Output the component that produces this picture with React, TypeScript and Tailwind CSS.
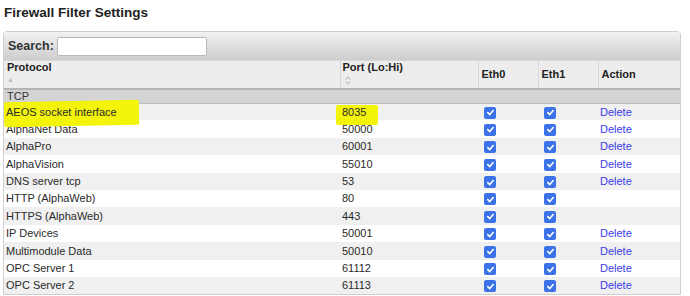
import React from "react";

type Row = { name: string; port: string; del: boolean; mark?: boolean };

const rows: Row[] = [
  { name: "AEOS socket interface", port: "8035", del: true, mark: true },
  { name: "AlphaNet Data", port: "50000", del: true },
  { name: "AlphaPro", port: "60001", del: true },
  { name: "AlphaVision", port: "55010", del: true },
  { name: "DNS server tcp", port: "53", del: true },
  { name: "HTTP (AlphaWeb)", port: "80", del: false },
  { name: "HTTPS (AlphaWeb)", port: "443", del: false },
  { name: "IP Devices", port: "50001", del: true },
  { name: "Multimodule Data", port: "50010", del: true },
  { name: "OPC Server 1", port: "61112", del: true },
  { name: "OPC Server 2", port: "61113", del: true },
];

const Check = () => (
  <span className="inline-flex w-[12px] h-[12px] rounded-[2px] bg-[#3b72e8] items-center justify-center align-middle">
    <svg width="9" height="9" viewBox="0 0 10 10">
      <path d="M2 5.2 L4.2 7.3 L8 2.8" stroke="white" strokeWidth="1.8" fill="none" strokeLinecap="round" strokeLinejoin="round" />
    </svg>
  </span>
);

// yellow marker pen highlight drawn over the row
const Marker: React.FC<{ children: React.ReactNode; className: string }> = ({ children, className }) => (
  <span className="relative inline-block">
    <span className={"absolute bg-[#f4f40a] " + className}></span>
    <span className="relative">{children}</span>
  </span>
);

export default function App() {
  return (
    <div className="w-[690px] h-[296px] bg-white overflow-hidden text-[#2a2a2a] font-['Liberation_Sans',Arial,sans-serif]">
      <h1 className="pl-[4px] pt-[5px] text-[13.5px] font-bold text-[#1e1e1e] leading-[16px]">Firewall Filter Settings</h1>
      <div className="ml-[3px] mt-[10px] w-[678px] border border-[#cfcfcf] rounded-t-[4px] overflow-hidden">
        <div className="h-[28px] flex items-center px-[4px] gap-[3px] bg-gradient-to-b from-[#f2f2f2] to-[#cdcdcd]">
          <span className="text-[12.5px] font-bold text-[#333]">Search:</span>
          <div className="w-[150px] h-[19px] bg-white border border-[#b8b8b8] rounded-[2px]"></div>
        </div>
        <table className="w-full table-fixed border-collapse text-[11px]">
          <colgroup>
            <col className="w-[336px]" />
            <col className="w-[138px]" />
            <col className="w-[60px]" />
            <col className="w-[60px]" />
            <col />
          </colgroup>
          <thead>
            <tr className="h-[28px] bg-[#ededed] border-t border-[#d8d8d8] border-b-2 border-b-[#b4b4b4] text-[#222]">
              <th className="text-left align-top font-bold px-[3px] pt-0 border-r border-[#d8d8d8]">
                <div className="leading-[13px]">Protocol</div>
                <div className="text-[7px] text-[#bbb] leading-[12px]">▲</div>
              </th>
              <th className="text-left align-top font-bold px-[2px] pt-0 border-r border-[#d8d8d8]">
                <div className="leading-[13px]">Port (Lo:Hi)</div>
                <svg width="8" height="11" viewBox="0 0 8 11" className="ml-[1px] mt-[1px]">
                  <path d="M1.5 4.5 L4 2 L6.5 4.5 M1.5 6.5 L4 9 L6.5 6.5" stroke="#c4c4c4" strokeWidth="1.2" fill="none" />
                </svg>
              </th>
              <th className="text-left font-bold px-[3px] border-r border-[#d8d8d8]">Eth0</th>
              <th className="text-left font-bold px-[3px] border-r border-[#d8d8d8]">Eth1</th>
              <th className="text-left font-bold px-[3px]">Action</th>
            </tr>
          </thead>
          <tbody>
            <tr className="h-[14px] bg-[#d4d4d4] border-b border-[#bdbdbd]">
              <td colSpan={5} className="px-[3px] text-[#333] leading-[13px]">TCP</td>
            </tr>
            {rows.map((r, i) => (
              <tr key={r.name} className={"h-[17.4px] " + (i % 2 === 0 ? "bg-[#f0f0f0]" : "bg-white")}>
                <td className="px-[2px] whitespace-nowrap">
                  {r.mark ? (
                    <Marker className="-left-[2px] -right-[22px] -top-[3px] -bottom-[5px] rounded-[2px] -rotate-[1deg]">{r.name}</Marker>
                  ) : (
                    r.name
                  )}
                </td>
                <td className="px-[2px]">
                  {r.mark ? (
                    <Marker className="-left-[6px] -right-[12px] top-[1px] -bottom-[5px] rounded-[2px]">{r.port}</Marker>
                  ) : (
                    r.port
                  )}
                </td>
                <td className="pl-[6px]">
                  <Check />
                </td>
                <td className="pl-[6px]">
                  <Check />
                </td>
                <td className="px-[2px]">
                  {r.del && <span className="text-[#3b3be6]">Delete</span>}
                </td>
              </tr>
            ))}
          </tbody>
        </table>
      </div>
    </div>
  );
}
